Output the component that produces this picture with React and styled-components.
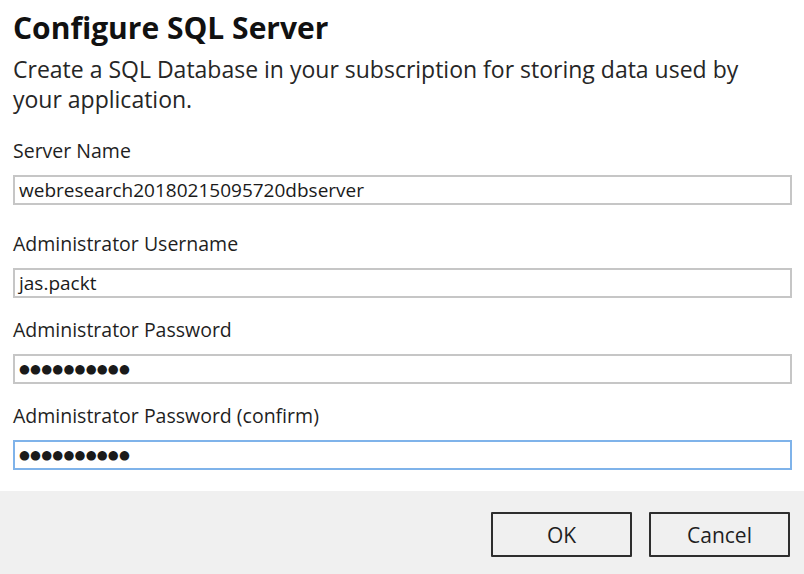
import React from "react";
import styled, { createGlobalStyle } from "styled-components";

const Global = createGlobalStyle`
  html, body { margin: 0; padding: 0; background: #ffffff; }
  body { font-family: "Open Sans", "Noto Sans", sans-serif; color: #1f1f1f; }
  * { box-sizing: border-box; }
`;

const Dialog = styled.div`
  width: 804px;
  height: 574px;
  display: flex;
  flex-direction: column;
  background: #ffffff;
`;

const Body = styled.div`
  flex: 1;
  padding: 9px 12px 0 13px;
  display: flex;
  flex-direction: column;
`;

const Title = styled.h1`
  margin: 0;
  font-size: 30px;
  line-height: 38px;
  font-weight: 700;
  color: #111111;
`;

const Subtitle = styled.p`
  margin: 7px 0 0;
  font-size: 23px;
  line-height: 30px;
  color: #262626;
  max-width: 750px;
`;

const Form = styled.div`
  margin-top: 25px;
  display: flex;
  flex-direction: column;
  gap: 20px;
`;

const Field = styled.div`
  display: flex;
  flex-direction: column;
  gap: 12px;
  margin-bottom: ${(p) => (p.$extra ? "7px" : "0")};
`;

const Label = styled.label`
  font-size: 19.5px;
  line-height: 24px;
  color: #1f1f1f;
`;

const Box = styled.div`
  height: 30px;
  width: 100%;
  border: 2px solid ${(p) => (p.$focused ? "#7fb3ea" : "#c6c6c6")};
  background: #ffffff;
  display: flex;
  align-items: center;
  padding: 0 4px;
  font-size: 19px;
  color: #1a1a1a;
  white-space: nowrap;
  overflow: hidden;
`;

const Dots = styled.span`
  font-family: "DejaVu Sans", sans-serif;
  font-size: 12.5px;
  letter-spacing: 0.2px;
  color: #1a1a1a;
  line-height: 1;
`;

const Footer = styled.div`
  height: 83px;
  background: #f0f0f0;
  display: flex;
  justify-content: flex-end;
  align-items: flex-start;
  padding: 21px 14px 0 0;
  gap: 17px;
`;

const Button = styled.button`
  width: 141px;
  height: 45px;
  background: #f0f0f0;
  border: 2px solid #2e2e2e;
  border-radius: 1px;
  font-family: "Open Sans", "Noto Sans", sans-serif;
  font-size: 21px;
  color: #1f1f1f;
  padding: 0;
  cursor: pointer;
`;

const fields = [
  { label: "Server Name", value: "webresearch20180215095720dbserver", extra: true },
  { label: "Administrator Username", value: "jas.packt" },
  { label: "Administrator Password", password: true },
  { label: "Administrator Password (confirm)", password: true, focused: true },
];

export default function App() {
  return (
    <>
      <Global />
      <Dialog>
        <Body>
          <Title>Configure SQL Server</Title>
          <Subtitle>
            Create a SQL Database in your subscription for storing data used by your application.
          </Subtitle>
          <Form>
            {fields.map((f) => (
              <Field key={f.label} $extra={f.extra}>
                <Label>{f.label}</Label>
                <Box $focused={f.focused}>
                  {f.password ? <Dots>●●●●●●●●●●</Dots> : f.value}
                </Box>
              </Field>
            ))}
          </Form>
        </Body>
        <Footer>
          <Button>OK</Button>
          <Button>Cancel</Button>
        </Footer>
      </Dialog>
    </>
  );
}
